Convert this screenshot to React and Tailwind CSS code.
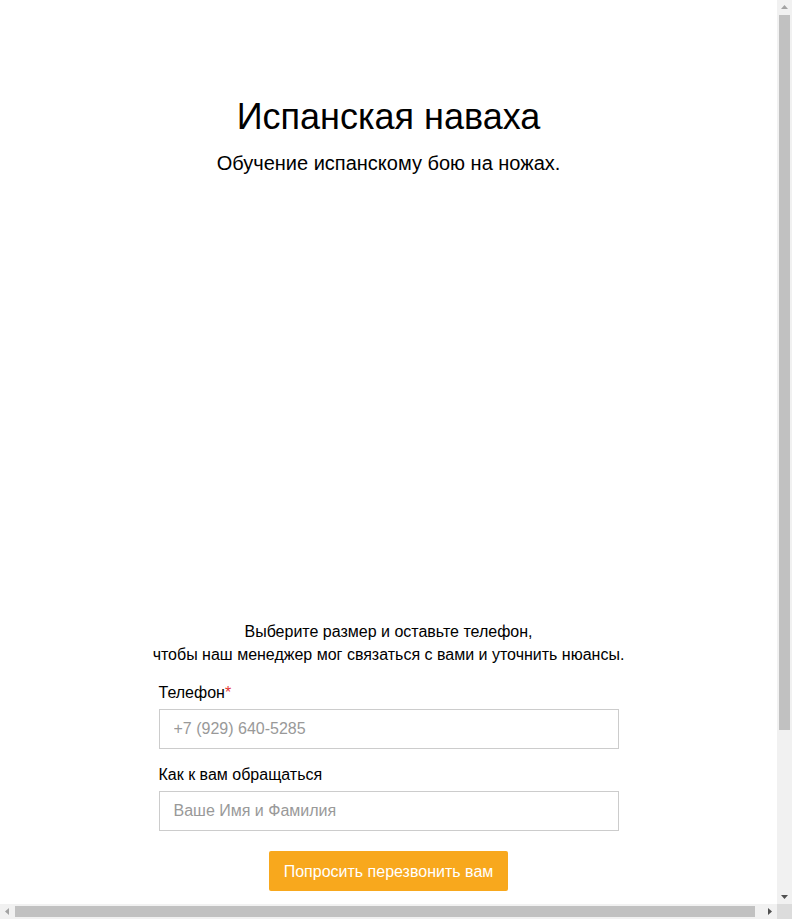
function Arrow({ dir, dark }) {
  const pts = {
    up: "3.5,5 7,9 0,9",
    down: "0,5 7,5 3.5,9",
    left: "5,3.5 9,0 9,7",
    right: "5,0 9,3.5 5,7",
  };
  const vertical = dir === "up" || dir === "down";
  return (
    <svg
      viewBox={vertical ? "0 0 7 14" : "0 0 14 7"}
      className={vertical ? "h-[14px] w-[7px]" : "h-[7px] w-[14px]"}
    >
      <polygon points={pts[dir]} fill={dark ? "#505050" : "#a3a3a3"} />
    </svg>
  );
}

function VScrollbar() {
  return (
    <div className="flex w-[15px] flex-col bg-[#f1f1f1]">
      <div className="flex h-[15px] items-start justify-center">
        <Arrow dir="up" />
      </div>
      <div className="flex-1 px-[2px]">
        <div className="h-[715px] w-full bg-[#c1c1c1]" />
      </div>
      <div className="flex h-[15px] items-start justify-center pt-[1px]">
        <Arrow dir="down" dark />
      </div>
    </div>
  );
}

function HScrollbar() {
  return (
    <div className="flex h-[15px] flex-1 bg-[#f1f1f1]">
      <div className="flex w-[15px] items-center justify-start">
        <Arrow dir="left" />
      </div>
      <div className="flex-1 py-[2px]">
        <div className="h-full w-[740px] bg-[#c1c1c1]" />
      </div>
      <div className="flex w-[15px] items-center justify-end">
        <Arrow dir="right" dark />
      </div>
    </div>
  );
}

export default function App() {
  return (
    <div className="flex h-[919px] w-[792px] flex-col overflow-hidden bg-white text-black font-['Liberation_Sans',Arial,sans-serif]">
      <div className="flex min-h-0 flex-1">
        <main className="w-[777px] overflow-hidden">
          {/* Header */}
          <div className="pt-[97px] text-center">
            <h1 className="text-[36px] leading-[40px] font-normal">Испанская наваха</h1>
            <p className="mt-[12px] text-[20px] leading-[28px]">Обучение испанскому бою на ножах.</p>
          </div>

          {/* Image area (not loaded) */}
          <div className="h-[443px]" />

          {/* Callback form */}
          <div className="text-center text-[16px] leading-[23px]">
            <p>Выберите размер и оставьте телефон,</p>
            <p>чтобы наш менеджер мог связаться с вами и уточнить нюансы.</p>
          </div>

          <form className="mx-auto mt-[15px] w-[460px] text-[16px] leading-[23px]">
            <label className="mb-[5px] block">
              Телефон<span className="text-[#e53935]">*</span>
            </label>
            <input
              type="text"
              placeholder="+7 (929) 640-5285"
              className="block h-[40px] w-full border border-[#cccccc] px-[14px] text-[16px] outline-none placeholder:text-[#999999]"
            />

            <label className="mt-[14px] mb-[5px] block">Как к вам обращаться</label>
            <input
              type="text"
              placeholder="Ваше Имя и Фамилия"
              className="block h-[40px] w-full border border-[#cccccc] px-[14px] text-[16px] outline-none placeholder:text-[#999999]"
            />

            <div className="mt-[20px] flex justify-center">
              <button
                type="button"
                className="h-[40px] w-[239px] rounded-[2px] bg-[#f8a81d] text-[16px] text-white"
              >
                Попросить перезвонить вам
              </button>
            </div>
          </form>
        </main>
        <VScrollbar />
      </div>
      <div className="flex h-[15px]">
        <HScrollbar />
        <div className="w-[15px] bg-[#dcdcdc]" />
      </div>
    </div>
  );
}
